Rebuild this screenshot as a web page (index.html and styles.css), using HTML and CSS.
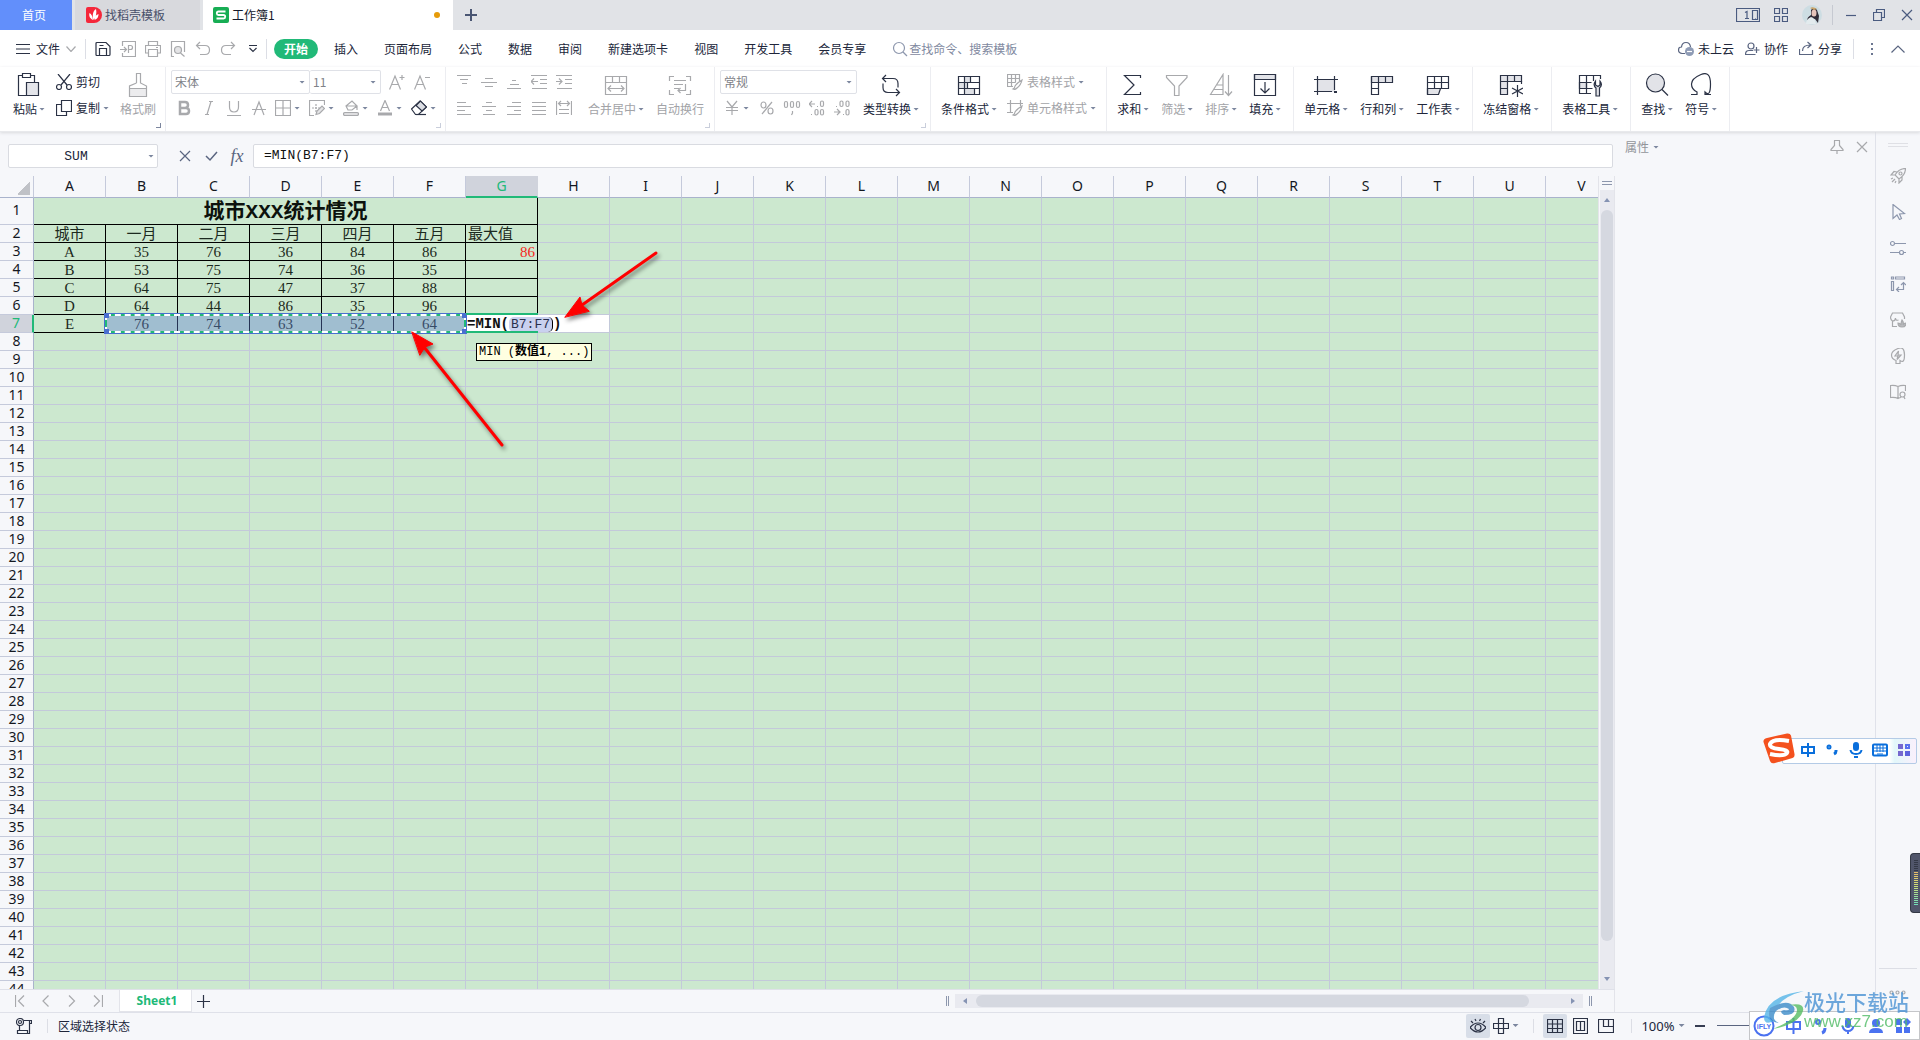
FILE: index.html
```html
<!DOCTYPE html>
<html lang="zh-CN">
<head>
<meta charset="utf-8">
<title>工作簿1</title>
<link rel="stylesheet" href="styles.css">
</head>
<body>
<header class="titlebar">
  <button class="home-tab">首页</button>
  <button class="doc-tab">
    <svg width="16" height="16" viewBox="0 0 16 16"><path d="M2 0h6a8 8 0 0 1 0 16H2a2 2 0 0 1-2-2V2a2 2 0 0 1 2-2z" fill="#f5273a"/><path d="M7 13C3 11 3 8 3.500 6c2 1 3 3 3.500 7zM7.500 13C6 8 7 4 10 2c1 4 0 8-2.500 11zM8.500 13c0-3 1-5 4-6 0 3-1 5-4 6z" fill="#fff"/></svg>
    <span>找稻壳模板</span>
  </button>
  <button class="doc-tab active">
    <svg width="16" height="16" viewBox="0 0 16 16"><rect width="16" height="16" rx="2" fill="#17ad54"/><path d="M12.500 4.500H5.500Q3.800 4.500 3.800 6.200T5.500 8h5q1.700 0 1.700 1.700T10.500 11.500h-7" fill="none" stroke="#fff" stroke-width="1.800"/></svg>
    <span>工作簿1</span><i class="dirty"></i>
  </button>
  <button class="new-tab" aria-label="新建"><svg width="12" height="12" viewBox="0 0 12 12"><path d="M6 0v12M0 6h12" stroke="#4a5673" stroke-width="2"/></svg></button>
  <div class="window-tools">
    <button aria-label="窗口"><svg width="24" height="14" viewBox="0 0 24 14" class="ln blue"><path d="M.5.5h23v13H.5zM16.500 2.500h5v9h-5zM9 4.500l2-1v7M9 10.500h4M19 11h1"/></svg></button>
    <button aria-label="应用"><svg width="14" height="14" viewBox="0 0 14 14" class="ln blue"><path d="M.5.5h5v5h-5zM8.500.5h5v5h-5zM.5 8.500h5v5h-5zM8.500 8.500h5v5h-5z"/></svg></button>
    <button aria-label="账户"><svg width="20" height="20" viewBox="0 0 20 20"><circle cx="10" cy="10" r="10" fill="#cddde3"/><path d="M9 5q3-4 6 0l2 6-1 7-3-4-5-1-3 3q0-4 4-6z" fill="#302c38"/><ellipse cx="12" cy="8" rx="2.500" ry="3.500" fill="#e6c4bb"/><path d="M8 3q3-2 7 1l-3 1z" fill="#c9a368"/><path d="M9 12q4 1 5 7H4q0-5 5-7z" fill="#e3ebee"/></svg></button>
    <i class="vline"></i>
    <button aria-label="最小化"><svg width="12" height="12" viewBox="0 0 12 12" class="ln blue"><path d="M1 6.500h10"/></svg></button>
    <button aria-label="还原"><svg width="12" height="12" viewBox="0 0 12 12" class="ln blue"><path d="M.5 3.500h8v8h-8zM3.500 3V.5h8v8H9"/></svg></button>
    <button aria-label="关闭"><svg width="12" height="12" viewBox="0 0 12 12" class="ln blue"><path d="M1 1l10 10M11 1L1 11"/></svg></button>
  </div>
</header>

<nav class="menubar">
  <button class="file"><svg width="14" height="12" viewBox="0 0 14 12" class="ln"><path d="M0 1.500h14M0 6h14M0 10.500h14"/></svg>文件<svg width="10" height="6" viewBox="0 0 10 6" class="ln dim"><path d="M.5.5l4.500 5 4.500-5"/></svg></button>
  <i class="vline"></i>
  <div class="quick">
    <button aria-label="保存"><svg width="16" height="16" viewBox="0 0 16 16" class="ln"><path d="M1 2.500q0-1 1-1h9l4 4v8q0 1-1 1H2q-1 0-1-1zM4.500 14V7.500h7V14M4.500 4.500h4"/></svg></button>
    <button aria-label="输出为PDF"><svg width="16" height="16" viewBox="0 0 16 16" class="ln dim"><path d="M2.500 5V.5h13v15h-13V12M0 8.500h6M4 6l2.500 2.500L4 11M8.500 12V4.500h2q2 0 2 2t-2 2h-2"/></svg></button>
    <button aria-label="打印"><svg width="16" height="16" viewBox="0 0 16 16" class="ln dim"><path d="M3.500 4V.5h9V4M3 12H.5V4.500h15V12H13M3.500 8.500h9v7h-9zM11 6.500h2"/></svg></button>
    <button aria-label="打印预览"><svg width="16" height="16" viewBox="0 0 16 16" class="ln dim"><path d="M4 15.500H1.500V.5h13V11M10.500 12l4 3.500"/><circle cx="8" cy="9" r="3.500" fill="#e4e4e6"/></svg></button>
    <button aria-label="撤消"><svg width="16" height="16" viewBox="0 0 16 16" class="ln dim"><path d="M5 1L1.500 4.500 5 8M2 4.500h8q4.500 0 4.500 4.500T10 13.500H5"/></svg></button>
    <button aria-label="恢复"><svg width="16" height="16" viewBox="0 0 16 16" class="ln dim"><path d="M11 1l3.500 3.500L11 8M14 4.500H6Q1.500 4.500 1.500 9T6 13.500h5"/></svg></button>
    <button aria-label="更多"><svg width="8" height="8" viewBox="0 0 8 8" class="ln"><path d="M0 .5h8M.5 3L4 6.500 7.500 3"/></svg></button>
  </div>
  <i class="vline"></i>
  <div class="tabs">
    <button class="on">开始</button><button>插入</button><button>页面布局</button><button>公式</button><button>数据</button><button>审阅</button><button>新建选项卡</button><button>视图</button><button>开发工具</button><button>会员专享</button>
  </div>
  <label class="search"><svg width="16" height="16" viewBox="0 0 16 16" class="ln mist"><circle cx="7" cy="7" r="5.500"/><path d="M11 11l4 4"/></svg><input type="search" aria-label="搜索" placeholder="查找命令、搜索模板"></label>
  <div class="cloud">
    <button><svg width="16" height="16" viewBox="0 0 16 16" class="ln slate"><path d="M7 12.500H4q-3.500-.5-3.500-3.500T3.500 6Q4 1.500 8 1.500T12.500 6"/><circle cx="11.500" cy="10.500" r="4.500" fill="#8e9bb5" stroke="none"/><path d="M9 10.500h5" stroke="#fff"/></svg>未上云</button>
    <button><svg width="15" height="16" viewBox="0 0 15 16" class="ln slate"><circle cx="6" cy="5" r="3"/><path d="M8 9.500H4Q.5 9.500.5 13.500h10M11.500 6v6M8.500 9h6"/></svg>协作</button>
    <button><svg width="15" height="16" viewBox="0 0 15 16" class="ln slate"><path d="M.5 8v5.500h13V9M3.500 10q0-6 8-6M8.500 1l3.500 3-3.500 3"/></svg>分享</button>
    <i class="vline"></i>
    <button aria-label="更多"><svg width="3" height="14" viewBox="0 0 3 14"><path d="M0 1h2v2H0zM0 6h2v2H0zM0 11h2v2H0z" fill="#6b7690"/></svg></button>
    <button aria-label="收起"><svg width="14" height="8" viewBox="0 0 14 8" class="ln slate"><path d="M.5 7.500L7 1l6.500 6.500"/></svg></button>
  </div>
</nav>

<section class="ribbon">
  <div class="group g-clip">
    <button class="big"><svg width="24" height="24" viewBox="0 0 24 24" class="ln"><path d="M9 22.500H1.500v-20H5M14 2.500h3.500V9"/><path d="M5.500.5h8v4h-8z"/><path d="M9.500 9.500h12v13h-12z" fill="#e4e5ea"/></svg><span>粘贴<i class="caret"></i></span></button>
    <div class="rows">
      <button class="small"><svg width="16" height="16" viewBox="0 0 16 16" class="ln"><path d="M2 0l9 11M14 0L5 11"/><circle cx="3" cy="13" r="2.500"/><circle cx="13" cy="13" r="2.500"/></svg>剪切</button>
      <button class="small"><svg width="16" height="16" viewBox="0 0 16 16" class="ln"><path d="M5 4.500H.5v11h10V12M5.500.5h10v11h-10z"/></svg>复制<i class="caret"></i></button>
    </div>
    <button class="big off"><svg width="24" height="24" viewBox="0 0 24 24" class="ln dim"><path d="M4 16h16v7H4z" fill="#ececee" stroke="none"/><path d="M10.500 10V.5h4V10l6 3v10.500h-17V13l7-3M3.500 15.500h17"/></svg><span>格式刷</span></button>
    <i class="corner dark"></i>
  </div>

  <div class="group tight">
    <div class="rows">
      <div class="row">
        <span class="combo font"><select aria-label="字体"><option>宋体</option></select><i class="caret"></i></span><span class="combo size"><select aria-label="字号"><option>11</option></select><i class="caret"></i></span>
        <button class="tool first" aria-label="增大字号"><svg width="16" height="16" viewBox="0 0 16 16" class="ln dim"><path d="M.5 15.500L6 2l5.500 13.500M2.500 10.500h7M10.500 3.500h5M13 1v5"/></svg></button>
        <button class="tool" aria-label="减小字号"><svg width="16" height="16" viewBox="0 0 16 16" class="ln dim"><path d="M.5 15.500L6 2l5.500 13.500M2.500 10.500h7M11 3.500h5"/></svg></button>
      </div>
      <div class="row">
        <button class="tool" aria-label="加粗"><svg width="16" height="16" viewBox="0 0 16 16" class="ln dim"><path d="M4 2h5q3 0 3 3t-3 3H4zM4 8h6q3 0 3 3t-3 3H4z" stroke-width="2.500"/></svg></button>
        <button class="tool" aria-label="倾斜"><svg width="16" height="16" viewBox="0 0 16 16" class="ln dim"><path d="M8 1.500h4M4 14.500h4M10 1.500l-4 13"/></svg></button>
        <button class="tool" aria-label="下划线"><svg width="16" height="16" viewBox="0 0 16 16" class="ln dim"><path d="M3.500 1v6q0 5 4.500 5t4.500-5V1M1 15.500h14"/></svg></button>
        <button class="tool" aria-label="删除线"><svg width="16" height="16" viewBox="0 0 16 16" class="ln dim"><path d="M3 15L8 2l5 13M1 9.500h14"/></svg></button>
        <button class="tool wide" aria-label="边框"><svg width="16" height="16" viewBox="0 0 16 16" class="ln dim"><path d="M.5.5h15v15H.5zM8 .5v15M.5 8h15"/></svg><i class="caret"></i></button>
        <button class="tool wide" aria-label="绘图边框"><svg width="16" height="16" viewBox="0 0 16 16" class="ln dim"><path d="M5 15.500H.5V.5h15V5"/><path d="M3 8h8M7 4v8" stroke-dasharray="2 1"/><path d="M7 14.500l1-3.500 5-5 2.500 2.500-5 5z" fill="#e4e4e6"/></svg><i class="caret"></i></button>
        <button class="tool wide" aria-label="填充颜色"><svg width="16" height="16" viewBox="0 0 16 16" class="ln dim"><path d="M3 6l6-5 5 5-5 4H5zM14 6v4M3 6h10"/><rect x=".5" y="12.500" width="15" height="3" rx="1.500" fill="#dedee0"/></svg><i class="caret"></i></button>
        <button class="tool wide" aria-label="字体颜色"><svg width="16" height="16" viewBox="0 0 16 16" class="ln dim"><path d="M3.500 11L8 .5 12.500 11M5 7.500h6"/><path d="M1 14h14" stroke-width="3"/></svg><i class="caret"></i></button>
        <button class="tool wide" aria-label="清除"><svg width="16" height="16" viewBox="0 0 16 16" class="ln"><path d="M.5 9L9 1l6.500 6-8 7.500h-3z"/><path d="M5 5.500L9.500 1l6 6-4.500 4z" fill="#dcdee4"/><path d="M5 14.500h10"/></svg><i class="caret"></i></button>
      </div>
    </div>
    <i class="corner"></i>
  </div>

  <div class="group tight g-align">
    <div class="rows">
      <div class="row">
        <button class="tool" aria-label="顶端对齐"><svg width="16" height="16" viewBox="0 0 16 16" class="ln dim"><path d="M1 1.500h14M4 5.500h8M6 9.500h5"/></svg></button>
        <button class="tool" aria-label="垂直居中"><svg width="16" height="16" viewBox="0 0 16 16" class="ln dim"><path d="M4 4.500h8M0 8.500h16M4 12.500h8"/></svg></button>
        <button class="tool" aria-label="底端对齐"><svg width="16" height="16" viewBox="0 0 16 16" class="ln dim"><path d="M6 6.500h4M4 10.500h9M1 14.500h14"/></svg></button>
        <button class="tool" aria-label="减少缩进"><svg width="16" height="16" viewBox="0 0 16 16" class="ln dim"><path d="M0 1.500h16M9 5.500h7M9 9.500h7M1 14.500h15M0 7.500h7M3 4.500l-3 3 3 3"/></svg></button>
        <button class="tool" aria-label="增加缩进"><svg width="16" height="16" viewBox="0 0 16 16" class="ln dim"><path d="M0 1.500h16M9 5.500h7M9 9.500h7M1 14.500h15M0 7.500h6M3 4.500l3 3-3 3"/></svg></button>
      </div>
      <div class="row">
        <button class="tool" aria-label="左对齐"><svg width="16" height="16" viewBox="0 0 16 16" class="ln dim"><path d="M1 2.500h9M1 6.500h14M1 10.500h8M1 14.500h14"/></svg></button>
        <button class="tool" aria-label="居中"><svg width="16" height="16" viewBox="0 0 16 16" class="ln dim"><path d="M5 2.500h6M1 6.500h14M5 10.500h6M2 14.500h12"/></svg></button>
        <button class="tool" aria-label="右对齐"><svg width="16" height="16" viewBox="0 0 16 16" class="ln dim"><path d="M6 2.500h9M1 6.500h14M8 10.500h7M1 14.500h14"/></svg></button>
        <button class="tool" aria-label="两端对齐"><svg width="16" height="16" viewBox="0 0 16 16" class="ln dim"><path d="M1 2.500h14M1 6.500h14M1 10.500h14M1 14.500h14"/></svg></button>
        <button class="tool" aria-label="分散对齐"><svg width="16" height="16" viewBox="0 0 16 16" class="ln dim"><path d="M.5 1v14M15.500 1v14M3 3.500h10M5 1L2.500 3.500 5 6M11 1l2.500 2.500L11 6M3 9.500h10M3 13.500h10"/></svg></button>
      </div>
    </div>
    <button class="big off"><svg width="24" height="24" viewBox="0 0 24 24" class="ln dim"><path d="M1.500 3.500h21v18h-21zM1.500 9.500h21M8.500 3.500v6M15.500 3.500v6M4 15.500h15M7 12.500l-3 3 3 3M17 12.500l3 3-3 3"/></svg><span>合并居中<i class="caret"></i></span></button>
    <button class="big off"><svg width="24" height="24" viewBox="0 0 24 24" class="ln dim"><path d="M6 3.500H1.500V8M18 3.500h4.500V8M6 21.500H1.500V17M18 21.500h4.500V17M6 7.500h12M6 11.500h9M6 15.500h5M17.500 11v6.500H10M12.500 15L10 17.500l2.500 2.500"/></svg><span>自动换行</span></button>
    <i class="corner"></i>
  </div>

  <div class="group tight g-num">
    <div class="rows">
      <div class="row"><span class="combo num"><select aria-label="数字格式"><option>常规</option></select><i class="caret"></i></span></div>
      <div class="row">
        <button class="tool wide" aria-label="货币"><svg width="16" height="16" viewBox="0 0 16 16" class="ln dim"><path d="M3 1l5 6 5-6M2 7.500h12M2 10.500h12M8 7v8"/></svg><i class="caret"></i></button>
        <button class="tool" aria-label="百分比"><svg width="16" height="16" viewBox="0 0 16 16" class="ln dim"><ellipse cx="4.500" cy="5" rx="2.500" ry="3"/><ellipse cx="11.500" cy="11" rx="2.500" ry="3"/><path d="M13 2L3 14"/></svg></button>
        <button class="tool" aria-label="千位分隔"><svg width="18" height="16" viewBox="0 0 18 16" class="ln dim"><rect x="1.500" y="1.500" width="3" height="6" rx="1.500"/><rect x="7.500" y="1.500" width="3" height="6" rx="1.500"/><rect x="13.500" y="1.500" width="3" height="6" rx="1.500"/><path d="M9.500 11v2l-1 2"/></svg></button>
        <button class="tool" aria-label="增加小数位"><svg width="16" height="16" viewBox="0 0 16 16" class="ln dim"><path d="M0 4h6M3 1L0 4l3 3M8 6.500h1M2 14.500h1"/><rect x="11.500" y="1" width="3" height="5.500" rx="1.500"/><rect x="6" y="9.500" width="3" height="5.500" rx="1.500"/><rect x="11.500" y="9.500" width="3" height="5.500" rx="1.500"/></svg></button>
        <button class="tool" aria-label="减少小数位"><svg width="16" height="16" viewBox="0 0 16 16" class="ln dim"><path d="M0 12h6M3 9l3 3-3 3M9 14.500h1M2 6.500h1"/><rect x="12" y="9.500" width="3" height="5.500" rx="1.500"/><rect x="6" y="1" width="3" height="5.500" rx="1.500"/><rect x="12" y="1" width="3" height="5.500" rx="1.500"/></svg></button>
      </div>
    </div>
    <button class="big"><svg width="24" height="24" viewBox="0 0 24 24" class="ln"><path d="M7 2L3.500 5.500 7 9M4 5.500h10q5 0 5 5v4M17 16l3.500 3.500L17 23M20 19.500H9q-5 0-5-5v-4"/></svg><span>类型转换<i class="caret"></i></span></button>
    <i class="corner"></i>
  </div>

  <div class="group g-style">
    <button class="big"><svg width="24" height="24" viewBox="0 0 24 24" class="ln"><path d="M7 4h7v5H7zM2 9h9v6H2zM7 15h10v7H7z" fill="#dfe1e6" stroke="none"/><path d="M1.500 3.500h21v18h-21zM1.500 9.500h21M1.500 15.500h21M7.500 3.500v18M13.500 3.500v6M10.500 9.500v6M17.500 15.500v6"/></svg><span>条件格式<i class="caret"></i></span></button>
    <div class="rows">
      <button class="small off"><svg width="16" height="16" viewBox="0 0 16 16" class="ln dim"><path d="M6 12.500H.5V.5h12V7M.5 4.500h12M.5 8.500h8M4.500.5v12M8.500.5v8M8 12q2-3 7-6-1 5-5 8-2 2-4 1 2-1 2-3z"/></svg>表格样式<i class="caret"></i></button>
      <button class="small off"><svg width="16" height="16" viewBox="0 0 16 16" class="ln dim"><path d="M0 3.500h16M3.500 0v13M0 12.500h6M13.500 0v6M8 12q2-3 7-6-1 5-5 8-2 2-4 1 2-1 2-3z"/></svg>单元格样式<i class="caret"></i></button>
    </div>
  </div>

  <div class="group">
    <button class="big"><svg width="24" height="24" viewBox="0 0 24 24" class="ln"><path d="M19.500 5V2.500h-16L13 12l-9.500 9.500h16V19"/></svg><span>求和<i class="caret"></i></span></button>
    <button class="big off"><svg width="24" height="24" viewBox="0 0 24 24" class="ln dim"><path d="M1.500 2.500h20.500v2L14 13v9.500h-4.500V13L1.500 4.500z"/></svg><span>筛选<i class="caret"></i></span></button>
    <button class="big off"><svg width="24" height="24" viewBox="0 0 24 24" class="ln dim"><path d="M1.500 21.500L14 1.500v20zM8 12h6M5 16.500h9M19.500 2v20M16 18.500l3.500 4 3.500-4"/></svg><span>排序<i class="caret"></i></span></button>
    <button class="big"><svg width="24" height="24" viewBox="0 0 24 24" class="ln"><path d="M1.500 1.500h21v5h-21z" fill="#e2e3e8"/><path d="M1.500 1.500h21v21h-21zM12 9v11M7.500 15.500L12 20l4.500-4.500"/></svg><span>填充<i class="caret"></i></span></button>
  </div>

  <div class="group">
    <button class="big"><svg width="24" height="24" viewBox="0 0 24 24" class="ln"><path d="M4 7h17v12H4z" fill="#e2e3e8" stroke="none"/><path d="M0 6.500h24M3.500 3v19M20.500 3v14M0 18.500h18"/><path d="M20 18h3v2h-3z" fill="#2b3245" stroke="none"/></svg><span>单元格<i class="caret"></i></span></button>
    <button class="big"><svg width="24" height="24" viewBox="0 0 24 24" class="ln"><path d="M1.500 3.500h21v6h-21z" fill="#e2e3e8"/><path d="M8.500 3.500v18h-7v-18M15.500 3.500v6M1.500 15.500h7"/></svg><span>行和列<i class="caret"></i></span></button>
    <button class="big"><svg width="24" height="24" viewBox="0 0 24 24" class="ln"><path d="M1.500 15.500h13l-2 6h-11z" fill="#e2e3e8"/><path d="M14 15.500h8.500v-12h-21v18M1.500 9.500h21M8.500 3.500v12M15.500 3.500v12"/></svg><span>工作表<i class="caret"></i></span></button>
  </div>
  <div class="group">
    <button class="big"><svg width="24" height="24" viewBox="0 0 24 24" class="ln"><path d="M1.500 2.500h21v6h-14v13h-7z" fill="#e2e3e8"/><path d="M8.500 2.500v6M15.500 2.500v6M22.500 8v3M1.500 8.500h7M1.500 15.500h7M18.500 12v12M13 15l11 6M24 15l-11 6"/></svg><span>冻结窗格<i class="caret"></i></span></button>
  </div>
  <div class="group">
    <button class="big"><svg width="24" height="24" viewBox="0 0 24 24" class="ln"><path d="M1.500 9.500h7v6h-7z" fill="#e2e3e8"/><path d="M13 20.500H1.500v-18h21V6M1.500 9.500h12M1.500 15.500h13M8.500 2.500v18M15.500 2.500V8"/><path d="M17.500 8q-3 4 .5 7v8h3.500v-8q3.500-3 .5-7v4l-2 1.500-2.500-1.500z" fill="#e2e3e8"/></svg><span>表格工具<i class="caret"></i></span></button>
  </div>
  <div class="group">
    <button class="big"><svg width="24" height="24" viewBox="0 0 24 24" class="ln"><circle cx="10.500" cy="10" r="9" fill="#e2e3e8"/><path d="M17 16.500l6 6"/></svg><span>查找<i class="caret"></i></span></button>
    <button class="big"><svg width="24" height="24" viewBox="0 0 24 24" class="ln"><path d="M2 21.500h6V19Q2.500 16.500 2.500 11T12 1.500 21.500 11 16 19v2.500h6"/></svg><span>符号<i class="caret"></i></span></button>
  </div>
</section>

<main class="work">
  <section class="book">
    <div class="formula-bar">
      <span class="namebox"><input type="text" aria-label="名称框" value="SUM"><i class="caret"></i></span>
      <button aria-label="取消"><svg width="12" height="12" viewBox="0 0 12 12" class="ln slate"><path d="M1 1l10 10M11 1L1 11"/></svg></button>
      <button aria-label="输入"><svg width="13" height="12" viewBox="0 0 13 12" class="ln slate"><path d="M1 6l4 4 7-8" stroke-width="1.500"/></svg></button>
      <button class="fx" aria-label="插入函数">fx</button>
      <input class="formula" type="text" aria-label="编辑栏" value="=MIN(B7:F7)">
    </div>
    <div class="grid-area">
      <div class="viewport">
        <table class="sheet"></table>
        <div class="range"><i></i><i></i><i></i><i></i></div>
        <div class="editor">=MIN(<mark>B7:F7</mark>)</div>
        <div class="editor-frame"></div>
        <div class="hint">MIN (<b>数值1</b>, ...)</div>
        <svg class="arrows" width="700" height="300" viewBox="0 0 700 300"><g stroke="#f00" stroke-width="3" stroke-linecap="round" fill="#f00"><path d="M656 77L582 129"/><path d="M565 141l15-20 2 8 7 6z" stroke-width="1"/><path d="M502 269L424 171"/><path d="M412 156l21 12-8 3-5 8z" stroke-width="1"/></g></svg>
      </div>
      <div class="vscroll"><span class="split"></span><div class="track"><i class="up"></i><span class="thumb"></span><i class="down"></i></div></div>
    </div>
    <div class="sheetbar">
      <div class="sheetnav">
        <button aria-label="第一张"><svg width="10" height="12" viewBox="0 0 10 12" class="ln dim"><path d="M.5 0v12M9 .5L3.500 6 9 11.500"/></svg></button>
        <button aria-label="上一张"><svg width="10" height="12" viewBox="0 0 10 12" class="ln dim"><path d="M7.500.5L2 6l5.500 5.500"/></svg></button>
        <button aria-label="下一张"><svg width="10" height="12" viewBox="0 0 10 12" class="ln dim"><path d="M2 .5L7.500 6 2 11.500"/></svg></button>
        <button aria-label="最后一张"><svg width="10" height="12" viewBox="0 0 10 12" class="ln dim"><path d="M9.500 0v12M1 .5L6.500 6 1 11.500"/></svg></button>
      </div>
      <button class="sheettab">Sheet1</button>
      <button class="addsheet" aria-label="新建工作表"><svg width="13" height="13" viewBox="0 0 13 13" class="ln"><path d="M6.500 0v13M0 6.500h13"/></svg></button>
      <div class="hscroll"><i class="bars"></i><div class="htrack"><i class="left"></i><span class="hthumb"></span><i class="right"></i></div><i class="bars"></i></div>
    </div>
  </section>
  <aside class="props">
    <button class="props-title">属性<i class="caret"></i></button>
    <button aria-label="固定"><svg width="14" height="14" viewBox="0 0 14 14" class="ln dim"><path d="M4 .5h6M4.500.5v5L1 9.500v1h12v-1L9.500 5.500v-5M7 11v3"/></svg></button>
    <button aria-label="关闭"><svg width="12" height="12" viewBox="0 0 12 12" class="ln dim"><path d="M1 1l10 10M11 1L1 11"/></svg></button>
  </aside>
  <aside class="side">
    <i class="grip"></i>
    <button aria-label="快捷"><svg width="16" height="16" viewBox="0 0 16 16" class="ln dim"><path d="M5 7q4-6.500 10.500-6.500Q15.500 7 9 11l-4-4zM5 7H1l3-3.500 3 .5M9 11v4l3-3v-3.500M1 11l2-1M2 14l3-3M5 15l1-2"/><circle cx="10.500" cy="5.500" r="1.500"/></svg></button>
    <button aria-label="选择"><svg width="16" height="16" viewBox="0 0 16 16" class="ln mist"><path d="M3 .5l11.500 9-5 .5 2 4.500-2 1-2.500-4.500-4 3.500z"/></svg></button>
    <button aria-label="属性"><svg width="16" height="16" viewBox="0 0 16 16" class="ln mist"><circle cx="2.500" cy="3.500" r="2"/><circle cx="11.500" cy="12.500" r="2"/><path d="M4.500 3.500H16M0 12.500h9.500M13.500 12.500H16"/></svg></button>
    <button aria-label="分析"><svg width="16" height="16" viewBox="0 0 16 16" class="ln mist"><path d="M1.500 1h2v2h-2zM5.500 1h9v2h-9zM1.500 5.500h2v9h-2zM7 13.500h6.500V7M9 11l-2.500 2.500L9 16M11 9l2.500-2.500L16 9"/></svg></button>
    <button aria-label="模板"><svg width="16" height="16" viewBox="0 0 16 16" class="ln dim"><path d="M7 14.500H2.500V9Q.5 8 .5 5l2-4h10l2 4v2M2.500 9q3 0 3-3 0 3 3 2"/><path d="M12 15q-4 0-4-4 2 0 3 2 0-3 1-5 2 2 1 5 1-2 3-2 0 4-4 4z" fill="#b9babd"/></svg></button>
    <button aria-label="灵感"><svg width="16" height="16" viewBox="0 0 16 16" class="ln dim"><path d="M6 12.500Q1.500 11 1.500 7T8 .5 14.500 7 10 12.500v3H6zM8.500 3L5 8h3l-1 3.500L11 7H8z"/></svg></button>
    <button aria-label="帮助"><svg width="16" height="16" viewBox="0 0 16 16" class="ln dim"><path d="M8 2.500Q5 1 .5 1.500v12q5-.5 7.500 1 2-1 3-1M8 2.500q3-1.500 7.500-1V7M8 2.500v12M15 15l-1-2"/><circle cx="12.500" cy="10.500" r="2.500"/></svg></button>
    <button class="more" aria-label="更多"><svg width="17" height="5" viewBox="0 0 17 5" class="ln dim"><circle cx="2.500" cy="2.500" r="1.500"/><circle cx="8.500" cy="2.500" r="1.500"/><circle cx="14.500" cy="2.500" r="1.500"/></svg></button>
  </aside>
</main>

<footer class="statusbar">
  <svg width="16" height="16" viewBox="0 0 16 16" class="ln"><circle cx="4" cy="4" r="3.500"/><circle cx="4" cy="4" r="1.500"/><path d="M8 2.500h7.500v3H13M13.500 3v12.500h-12v-3h10v3M3.500 8v4"/></svg>
  <i class="vline"></i>
  <span class="state">区域选择状态</span>
  <div class="views">
    <button class="pressed" aria-label="护眼模式"><svg width="16" height="16" viewBox="0 0 16 16" class="ln"><path d="M0 9.500q8-9 16 0-8 9-16 0zM1 3l2 2M5 1l1 2M10.500 1l-1 2M15 3l-2 2"/><circle cx="8" cy="9.500" r="3"/></svg></button>
    <button class="cross" aria-label="阅读模式"><svg width="16" height="16" viewBox="0 0 16 16" class="ln"><path d="M5.500.5h5v15h-5zM.5 5.500h15v5H.5z"/></svg><i class="caret"></i></button>
    <i class="vline"></i>
    <button class="pressed" aria-label="普通视图"><svg width="16" height="14" viewBox="0 0 16 14" class="ln"><path d="M.5.5h15v13H.5zM.5 5h15M.5 9.500h15M5.500.5v13M10.500.5v13"/></svg></button>
    <button aria-label="分页预览"><svg width="15" height="16" viewBox="0 0 15 16" class="ln"><path d="M.5.5h14v15H.5zM3.500 3.500h8v9h-8zM7.500 3.500v9"/></svg></button>
    <button aria-label="页面布局"><svg width="16" height="14" viewBox="0 0 16 14" class="ln"><path d="M.5.5h15v13H.5zM5.500.5v7h5v-7M10.500 7.500h5"/></svg></button>
    <i class="vline"></i>
    <button class="zoom">100%<i class="caret"></i></button>
    <button class="minus" aria-label="缩小"></button>
    <span class="zoomline"></span>
  </div>
</footer>

<div class="ime">
  <svg class="ime-logo" width="32" height="32" viewBox="0 0 32 32"><path d="M4 5L24 .5q3-.5 4 2L31.500 21q.5 3-2 4L12 30q-4 1-5-2L.5 9Q0 6 4 5z" fill="#f4511e"/><path d="M26 8Q10 5 7 11q-1 4 9 5 10 1 8 4-3 4-17 1" fill="none" stroke="#fff" stroke-width="4"/></svg>
  <svg width="16" height="16" viewBox="0 0 16 16" class="ime-ic"><path d="M2 5h12v6H2zM8 1v14"/></svg>
  <svg width="16" height="16" viewBox="0 0 16 16" class="ime-ic"><circle cx="5" cy="5" r="1.500"/><path d="M12 8v1q0 2-2 3" stroke-width="3"/></svg>
  <svg width="16" height="16" viewBox="0 0 16 16" class="ime-ic"><rect x="6" y="1" width="4" height="7" rx="2" fill="#0a6fdc"/><path d="M2.500 8Q3 12 8 12t5.500-4M6 15h4"/></svg>
  <svg width="16" height="16" viewBox="0 0 16 16" class="ime-ic"><rect x="1" y="2.500" width="14" height="11" rx="1"/><path d="M1 6h14M1 9h14M5 3v7M8 3v7M11 3v7M5 12h6" stroke-width="1"/></svg>
  <svg width="16" height="16" viewBox="0 0 16 16"><path d="M2 2h5v5H2zM2 9h5v5H2z" fill="#7568cf"/><path d="M9 9h5v5H9z" fill="#5d62dc"/><path d="M10 3h3v3h-3z" fill="none" stroke="#5870ee" stroke-width="2"/></svg>
</div>

<div class="meter"></div>

<div class="ifly">
  <svg width="24" height="24" viewBox="0 0 24 24"><circle cx="12" cy="12" r="9.500" fill="#fff" stroke="#4b72f0" stroke-width="2"/><text x="12" y="15" class="ifly-text">iFLY</text></svg>
  <svg width="20" height="20" viewBox="0 0 20 20" class="if-ic"><path d="M4 6h13v7H4zM10.500 2v16"/></svg>
  <svg width="20" height="20" viewBox="0 0 20 20" class="if-ic"><circle cx="7" cy="6" r="2"/><path d="M14 12q0 4-3 5" stroke-width="3"/></svg>
  <svg width="20" height="20" viewBox="0 0 20 20" class="if-ic"><rect x="8" y="3" width="4" height="8" rx="2" fill="#4b72f0"/><path d="M4.500 10q1 5 5.500 5t5.500-5M10 15v3"/></svg>
  <svg width="20" height="20" viewBox="0 0 20 20"><circle cx="10" cy="7" r="4" fill="#4b72f0"/><path d="M3 17q0-5 7-5t7 5z" fill="#4b72f0"/></svg>
  <svg width="20" height="20" viewBox="0 0 20 20"><path d="M3 3h6v6H3zM3 11h6v6H3zM11 11h6v6h-6zM14 2l4 4-4 4-4-4z" fill="#4b72f0"/></svg>
</div>

<div class="watermark">
  <svg width="46" height="42" viewBox="0 0 46 42"><path d="M2 27Q6 5 42 1 10 9 12 31 2 36 2 27z" fill="#55b5e8"/><path d="M8 18Q26 8 32 17q3 8-10 8-6-4 0-5 5 1 5-1-5-4-13 2-6 8 3 12Q4 32 8 18z" fill="#3c8bc9"/><path d="M27 15q16-3 14 6-4 13-30 18 24-10 24-19 0-5-8-5z" fill="#57bd62"/></svg>
  <div><b>极光下载站</b><span>www.xz7.com</span></div>
</div>
<script src="sheet.js"></script>
</body>
</html>
```
FILE: sheet.js
```js
const COLS = 22, ROWS = 44;
const data = {
  2: ["城市", "一月", "二月", "三月", "四月", "五月", "最大值"],
  3: ["A", 35, 76, 36, 84, 86, 86],
  4: ["B", 53, 75, 74, 36, 35, ""],
  5: ["C", 64, 75, 47, 37, 88, ""],
  6: ["D", 64, 44, 86, 35, 96, ""],
  7: ["E", 76, 74, 63, 52, 64, ""]
};
const table = document.querySelector(".sheet");
let html = '<colgroup><col class="rowcol">' + "<col>".repeat(COLS) + '</colgroup><thead><tr><th class="all"></th>';
for (let c = 0; c < COLS; c++) {
  html += `<th${c === 6 ? ' class="sel"' : ""}>${String.fromCharCode(65 + c)}</th>`;
}
html += "</tr></thead><tbody>";
for (let r = 1; r <= ROWS; r++) {
  html += `<tr${r === 1 ? ' class="head"' : ""}><th${r === 7 ? ' class="sel"' : ""}>${r}</th>`;
  for (let c = 0; c < COLS; c++) {
    if (r === 1 && c === 0) {
      html += '<td class="box title" colspan="7">城市XXX统计情况</td>';
      c = 6;
    } else if (data[r] && c < 7) {
      const kind = c < 6 ? "box" : r === 3 ? "box max" : "box start";
      html += `<td class="${kind}">${data[r][c]}</td>`;
    } else {
      html += "<td></td>";
    }
  }
  html += "</tr>";
}
table.innerHTML = html + "</tbody>";
```
FILE: styles.css
```css
* { box-sizing: border-box; }
html, body { height: 100%; }
body {
  margin: 0;
  display: flex;
  flex-direction: column;
  overflow: hidden;
  background: #f6f7fa;
  color: #20263a;
  font: 12px/18px "Noto Sans CJK SC", sans-serif;
}
button, input, select { font: inherit; color: inherit; border: 0; background: none; padding: 0; margin: 0; outline: 0; }
button { display: flex; align-items: center; justify-content: center; white-space: nowrap; }
svg { display: block; flex: none; }
.ln { fill: none; stroke: #2b3245; stroke-width: 1.2; }
.ln.dim { stroke: #a8a9ac; }
.ln.mist { stroke: #8d97ad; }
.ln.slate { stroke: #5a6580; }
.ln.blue { stroke: #4a5b80; }
.vline { width: 1px; height: 20px; background: #dcdee5; flex: none; }
.caret { flex: none; width: 6px; height: 3px; background: #7b869e; clip-path: polygon(0 0, 100% 0, 50% 100%); }

/* title bar */
.titlebar { display: flex; height: 30px; flex: none; background: #e1e3e7; }
.home-tab { width: 72px; background: #628ffb; color: #fff; margin-right: 3px; padding: 0 4px 1px 0; }
.doc-tab { width: 125px; background: #d8d9dd; justify-content: flex-start; padding: 0 10px 0 11px; gap: 3px; margin-right: 3px; color: #48506a; }
.doc-tab.active { width: 250px; background: #fff; color: #14192a; margin-right: 0; padding: 0 13px 0 10px; }
.dirty { width: 6px; height: 6px; border-radius: 3px; background: #e69b09; margin-left: auto; }
.new-tab { width: 36px; }
.window-tools { margin-left: auto; display: flex; align-items: center; gap: 14px; padding-right: 7px; height: 29px; }
.window-tools .vline { margin: 0 -4px; background: #c6c9d1; }
.window-tools button:nth-of-type(n+4) { margin-left: 2px; }

/* menu bar */
.menubar { display: flex; align-items: center; height: 37px; flex: none; background: #fff; }
.file { gap: 6px; padding: 0 9px 0 16px; }
.quick { display: flex; gap: 9px; padding: 0 9px; }
.quick button:last-child { margin: 0 0 0 4px; }
.quick + .vline { margin-right: 7px; }
.tabs { display: flex; }
.tabs button { padding: 0 13px; height: 20px; }
.tabs .on { background: #21b978; color: #fff; font-weight: bold; border-radius: 10px; padding: 0 10px; margin-right: 3px; }
.search { display: flex; align-items: center; gap: 1px; margin-left: 13px; }
.search input { width: 130px; appearance: none; }
.search input::placeholder { color: #7f89a0; opacity: 1; }
.cloud { display: flex; align-items: center; margin-left: auto; gap: 11px; padding-right: 15px; }
.cloud button { gap: 4px; }
.cloud .vline + button { margin: 0 6px; }

/* ribbon */
.ribbon { display: flex; height: 65px; flex: none; background: #fff; border-bottom: 1px solid #e8e9ec; box-shadow: 0 1px 3px #d9dade; z-index: 1; }
.group { display: flex; align-items: flex-start; gap: 12px; padding: 3px 12px 0 10px; position: relative; flex: none; border-right: 1px solid #ecedf1; }
.g-clip { padding: 3px 9px 0 13px; gap: 11px; }
.tight { padding: 3px 4px 0 5px; }
.g-align { padding-right: 10px; }
.g-num { gap: 6px; padding-right: 11px; }
.g-style { gap: 10px; padding-right: 10px; }
.big { flex-direction: column; gap: 3px; padding-top: 3px; }
.big span { display: flex; align-items: center; gap: 2px; }
.off { color: #a2a3a7; }
.rows { display: flex; flex-direction: column; gap: 2px; }
.row { display: flex; height: 24px; }
.small { height: 24px; gap: 4px; justify-content: flex-start; }
.small .caret { margin-left: -1px; }
.tool { width: 25px; height: 24px; }
.tool.wide { width: 34px; gap: 3px; padding-right: 1px; }
.tool.first { margin-left: 3px; }
.combo { display: grid; align-items: center; border: 1px solid #dfe1e7; border-radius: 2px; height: 24px; }
.combo select, .combo .caret { grid-area: 1 / 1; }
.combo .caret { justify-self: end; margin-right: 4px; }
.combo select { appearance: none; width: 100%; padding: 0 16px 0 3px; color: #808288; }
.font { width: 139px; }
.size { width: 71px; border-left: 0; }
.num { width: 137px; }
.corner { position: absolute; right: 4px; bottom: 3px; width: 5px; height: 5px; border: solid #c9cedb; border-width: 0 1px 1px 0; }
.corner.dark { border-color: #7c869e; }

/* workbook */
.work { flex: 1; min-height: 0; display: flex; }
.book { flex: 1; min-width: 0; display: flex; flex-direction: column; }
.formula-bar { height: 44px; flex: none; display: flex; align-items: center; padding: 4px 2px 0 8px; }
.namebox { display: grid; align-items: center; width: 150px; height: 24px; background: #fff; border: 1px solid #d9dbe1; border-radius: 2px; margin-right: 14px; }
.namebox input, .namebox .caret { grid-area: 1 / 1; }
.namebox input { width: 100%; text-align: center; padding: 2px 14px 0 0; font: 13px/20px "Liberation Mono", monospace; }
.namebox .caret { justify-self: end; margin-right: 3px; }
.formula-bar button { width: 26px; }
.formula-bar .fx { font: italic 18px/22px "Liberation Serif", serif; color: #5a6580; }
.formula { flex: 1; min-width: 0; height: 24px; background: #fff; border: 1px solid #d9dbe1; border-radius: 2px; padding: 0 10px 2px; margin-left: 3px; font: 13px/20px "Liberation Mono", monospace; color: #111; }
.grid-area { flex: 1; min-height: 0; display: flex; border-bottom: 1px solid #dfe1e9; }
.viewport { flex: 1; min-width: 0; position: relative; overflow: hidden; }
.sheet { table-layout: fixed; width: 1618px; border-spacing: 0; background: #cce8cf; }
.sheet col { width: 72px; }
.sheet .rowcol { width: 34px; }
.sheet th { padding: 0; height: 18px; background: #f6f7fa; font: 14px/15px "Noto Sans", sans-serif; color: #14171f; border-right: 1px solid #a9b3cc; border-bottom: 1px solid #c5cadb; vertical-align: top; }
.sheet thead th { height: 22px; line-height: 19px; border-bottom-color: #a9b3cc; border-right-color: #c5cadb; }
.sheet .head th { line-height: 24px; }
.sheet thead .all { background: linear-gradient(135deg, transparent 50%, #c0c2c7 50%) 18px 5px / 12px 14px no-repeat #f6f7fa; }
.sheet th.sel { background: #d0d3dc; color: #21b978; border-right: 2px solid #21b978; }
.sheet thead th.sel { border-right: 1px solid #d0d3dc; border-bottom: 2px solid #21b978; }
.sheet td { padding: 2px 0 0; height: 18px; border: solid #c3c9da; border-width: 0 1px 1px 0; text-align: center; white-space: nowrap; overflow: hidden; font: 15px/15px "Liberation Serif", "Noto Sans CJK SC", serif; color: #1c2a20; }
.sheet .head th, .sheet .head td { height: 27px; }
.sheet .box { border-color: #000; }
.sheet .title { padding: 4px 0 0; font: bold 21px/22px "Liberation Mono", "Noto Sans CJK SC", monospace; color: #0c120d; }
.sheet .start { text-align: left; padding-left: 2px; }
.sheet .max { text-align: right; padding-right: 2px; color: #f5291c; }

.range { position: absolute; left: 105px; top: 138px; width: 361px; height: 19px; background: #5f7fd166; border: 2px solid #21b978; outline: 1px solid #4a6fd0; }
.range::before { content: ""; position: absolute; inset: -2px; border: 2px dashed #fff; }
.range i { position: absolute; width: 5px; height: 5px; background: #4a6fd0; }
.range i:nth-child(1) { left: -3px; top: -3px; }
.range i:nth-child(2) { right: -3px; top: -3px; }
.range i:nth-child(3) { left: -3px; bottom: -3px; }
.range i:nth-child(4) { right: -3px; bottom: -3px; }
.editor { position: absolute; left: 467px; top: 139px; width: 142px; height: 17px; background: #fff; font: bold 14px/18px "Liberation Mono", monospace; color: #111; }
.editor mark { background: #c9d1ef; color: #29304e; border-radius: 5px; font-weight: normal; font-size: 13px; padding: 0 2px; border-right: 1px solid #000; }
.editor-frame { position: absolute; left: 466px; top: 137px; width: 72px; height: 20px; border: solid #21b978; border-width: 2px 0; }
.hint { position: absolute; left: 476px; top: 167px; height: 18px; padding: 0 2px; background: #ffffe1; border: 1px solid #000; font: 12px/16px "Liberation Mono", "Noto Sans CJK SC", monospace; color: #000; white-space: nowrap; }
.arrows { position: absolute; left: 0; top: 0; filter: drop-shadow(2px 3px 2px #0007); }

.vscroll { width: 17px; flex: none; display: flex; flex-direction: column; align-items: flex-end; border-left: 1px solid #e3e4ea; border-right: 1px solid #e3e4ea; }
.split { width: 10px; height: 4px; border: solid #8d97ad; border-width: 1px 0; margin: 5px 2px 5px 0; }
.track { flex: 1; width: 14px; background: #e9eaf0; display: flex; flex-direction: column; align-items: center; padding: 8px 0; gap: 8px; }
.thumb { flex: 1; width: 12px; border-radius: 6px; background: #d5d8e0; margin: 0 0 28px; }
.up, .down { width: 6px; height: 4px; background: #8593b3; clip-path: polygon(0 0, 100% 0, 50% 100%); }
.up { clip-path: polygon(0 100%, 100% 100%, 50% 0); }

.sheetbar { height: 22px; flex: none; display: flex; align-items: center; border-right: 1px solid #e3e4ea; }
.sheetnav { display: flex; gap: 16px; padding: 0 16px 0 15px; }
.sheettab { width: 73px; height: 22px; background: #fff; color: #21b978; font: bold 12px/18px "Noto Sans", sans-serif; border: 1px solid #e3e4ea; border-top: 0; padding-left: 3px; }
.addsheet { margin-left: 5px; }
.hscroll { margin-left: auto; width: 668px; display: flex; align-items: center; padding-right: 22px; gap: 6px; }
.bars { width: 3px; height: 10px; border: solid #8d97ad; border-width: 0 1px; }
.htrack { flex: 1; height: 14px; background: #e9eaf0; display: flex; align-items: center; justify-content: space-between; padding: 0 8px; }
.hthumb { flex: 1; height: 12px; border-radius: 6px; background: #d5d8e0; margin: 0 42px 0 9px; }
.left, .right { width: 4px; height: 6px; background: #8593b3; clip-path: polygon(0 50%, 100% 0, 100% 100%); }
.right { clip-path: polygon(100% 50%, 0 0, 0 100%); }

.props { width: 261px; flex: none; display: flex; align-items: flex-start; padding: 6px 7px 0 10px; border-right: 1px solid #e0e2ea; }
.props button { height: 18px; margin-left: 12px; }
.props .props-title { gap: 4px; margin: 0 auto 0 0; color: #929499; }
.side { width: 44px; flex: none; display: flex; flex-direction: column; align-items: center; gap: 20px; padding: 11px 1px 0 0; }
.grip { width: 20px; height: 4px; border: solid #dfe0e5; border-width: 1px 0; margin-bottom: 1px; }
.more { margin-top: auto; width: 38px; height: 44px; border-top: 1px solid #dcdee5; padding-top: 4px; }

/* status bar */
.statusbar { height: 28px; flex: none; display: flex; align-items: center; padding: 0 0 2px 16px; border-top: 1px solid #dfe1e9; }
.statusbar .vline { height: 14px; margin: 0 11px 0 15px; }
.statusbar .state { margin-left: -1px; }
.views { margin-left: auto; display: flex; align-items: center; height: 24px; }
.views button { height: 24px; width: 26px; }
.views .pressed { width: 24px; background: #d8dee8; border-radius: 2px; }
.views .cross { gap: 4px; width: 31px; }
.views .vline { margin: 0 9px 0 12px; }
.views .zoom { width: 44px; gap: 4px; font: 13px/18px "Noto Sans", sans-serif; margin-right: 10px; }
.views .minus { width: 10px; height: 2px; background: #363d52; margin-right: 12px; }
.zoomline { width: 203px; height: 1px; background: #5a6580; }

/* floating windows */
.ime { position: absolute; right: 3px; top: 738px; width: 135px; height: 26px; background: linear-gradient(90deg, #fff 80%, #e2f7fa 84%, #faf0fc); border: 1px solid #b4cbe6; border-radius: 2px; display: flex; align-items: center; justify-content: space-between; padding: 0 4px 2px 17px; z-index: 2; }
.ime-logo { position: absolute; left: -20px; top: -6px; }
.ime-ic { fill: none; stroke: #0a6fdc; stroke-width: 2; }
.meter { position: absolute; right: 0; top: 853px; width: 10px; height: 60px; border-radius: 4px 0 0 4px; border: 1px solid #333844; border-right: 0; background: repeating-linear-gradient(#0000 0 1px, #50556a 1px 2px) 3px 6px / 4px 46px no-repeat, linear-gradient(#333846 25%, #e6bb68 26%, #d0df76 55%, #69dfbd) 3px 6px / 4px 46px no-repeat, #50556a; z-index: 2; }
.ifly { position: absolute; right: 0; bottom: 0; width: 171px; height: 29px; background: #fff; border: 1px solid #c5c6c9; display: flex; align-items: center; justify-content: space-between; padding: 0 6px 0 2px; z-index: 2; }
.if-ic { fill: none; stroke: #4b72f0; stroke-width: 2; }
.ifly-text { font: bold 7px "Liberation Sans", sans-serif; fill: #4b72f0; text-anchor: middle; }
.watermark { position: absolute; right: 11px; bottom: 8px; display: flex; z-index: 3; opacity: .8; }
.watermark div { display: flex; flex-direction: column; margin-left: -4px; }
.watermark b { font: 500 21px/22px "Noto Sans CJK SC", sans-serif; color: #4a92d4; }
.watermark span { font: 17px/20px "Liberation Sans", sans-serif; color: #50bb66; }
```
